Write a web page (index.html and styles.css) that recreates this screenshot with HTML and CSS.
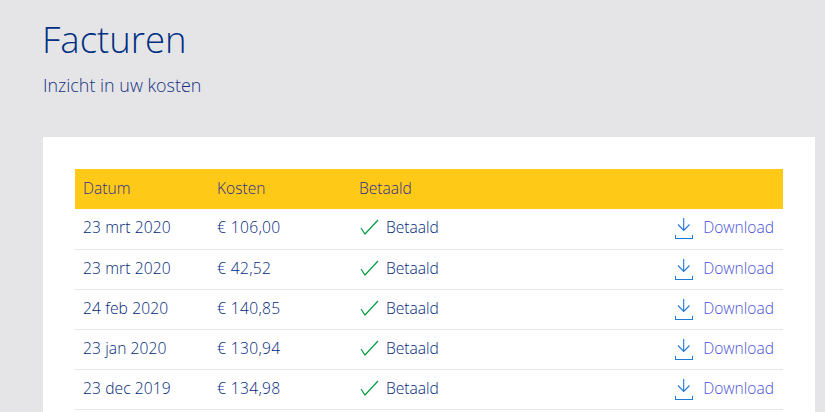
FILE: index.html
```html
<!DOCTYPE html>
<html lang="nl">
<head>
<meta charset="utf-8">
<title>Facturen</title>
<link rel="stylesheet" href="styles.css">
</head>
<body>
<main class="page">
  <h1 class="title">Facturen</h1>
  <p class="subtitle">Inzicht in uw kosten</p>
  <section class="card">
    <div class="row head"><span>Datum</span><span>Kosten</span><span>Betaald</span><span></span></div>
    <div class="row first">
      <span class="date">23 mrt 2020</span><span class="amount">€ 106,00</span>
      <span class="paid"><svg class="check" viewBox="0 0 20 16"><path d="M2 9 6 15 19 1"/></svg>Betaald</span>
      <a class="dl" href="#"><svg class="arrow" viewBox="0 0 18 24"><path d="M8.700 3V15.500M3 9.500l5.700 6 5.800-6"/><path d="M.5 20v3.500h17V20"/></svg>Download</a>
    </div>
    <div class="row">
      <span class="date">23 mrt 2020</span><span class="amount">€ 42,52</span>
      <span class="paid"><svg class="check" viewBox="0 0 20 16"><path d="M2 9 6 15 19 1"/></svg>Betaald</span>
      <a class="dl" href="#"><svg class="arrow" viewBox="0 0 18 24"><path d="M8.700 3V15.500M3 9.500l5.700 6 5.800-6"/><path d="M.5 20v3.500h17V20"/></svg>Download</a>
    </div>
    <div class="row">
      <span class="date">24 feb 2020</span><span class="amount">€ 140,85</span>
      <span class="paid"><svg class="check" viewBox="0 0 20 16"><path d="M2 9 6 15 19 1"/></svg>Betaald</span>
      <a class="dl" href="#"><svg class="arrow" viewBox="0 0 18 24"><path d="M8.700 3V15.500M3 9.500l5.700 6 5.800-6"/><path d="M.5 20v3.500h17V20"/></svg>Download</a>
    </div>
    <div class="row">
      <span class="date">23 jan 2020</span><span class="amount">€ 130,94</span>
      <span class="paid"><svg class="check" viewBox="0 0 20 16"><path d="M2 9 6 15 19 1"/></svg>Betaald</span>
      <a class="dl" href="#"><svg class="arrow" viewBox="0 0 18 24"><path d="M8.700 3V15.500M3 9.500l5.700 6 5.800-6"/><path d="M.5 20v3.500h17V20"/></svg>Download</a>
    </div>
    <div class="row">
      <span class="date">23 dec 2019</span><span class="amount">€ 134,98</span>
      <span class="paid"><svg class="check" viewBox="0 0 20 16"><path d="M2 9 6 15 19 1"/></svg>Betaald</span>
      <a class="dl" href="#"><svg class="arrow" viewBox="0 0 18 24"><path d="M8.700 3V15.500M3 9.500l5.700 6 5.800-6"/><path d="M.5 20v3.500h17V20"/></svg>Download</a>
    </div>
  </section>
</main>
</body>
</html>
```

FILE: styles.css
```css
* { box-sizing: border-box; }
html, body { margin: 0; height: 100%; }
body {
  background: #e5e5e8;
  font-family: "Open Sans", "Noto Sans", sans-serif;
  font-weight: 300;
  color: #003082;
  overflow: hidden;
}
.page { padding: 14px 10px 0 43px; }
.title {
  margin: 0 0 0 -1px;
  font-size: 36.500px;
  line-height: 50px;
  font-weight: 300;
  color: #003082;
}
.subtitle {
  margin: 9px 0 0;
  font-size: 17.900px;
  line-height: 24px;
  color: #14307f;
}
.card {
  margin-top: 40px;
  background: #fff;
  padding: 32px;
  height: 275px;
}
.row {
  display: grid;
  grid-template-columns: 134px 142px 1fr auto;
  align-items: center;
  height: 40px;
  padding: 0 9px 4px 8px;
  font-size: 15.600px;
  color: #00287a;
  border-bottom: 1px solid #e5e5e8;
}
.head {
  background: #ffc917;
  border-bottom: 0;
  padding-bottom: 2px;
  color: #2c2c8e;
}
.first { height: 41px; padding-bottom: 5px; }
.date { letter-spacing: .1px; }
.amount { letter-spacing: .35px; }
.paid { display: flex; align-items: center; gap: 7px; }
.check {
  width: 20px;
  height: 16px;
  fill: none;
  stroke: #009a42;
  stroke-width: 1.200;
}
.dl {
  display: flex;
  align-items: center;
  gap: 10px;
  color: #4a50d8;
  text-decoration: none;
}
.arrow {
  width: 18px;
  height: 24px;
  fill: none;
  stroke: #1f78dc;
  stroke-width: 1.100;
}
```
